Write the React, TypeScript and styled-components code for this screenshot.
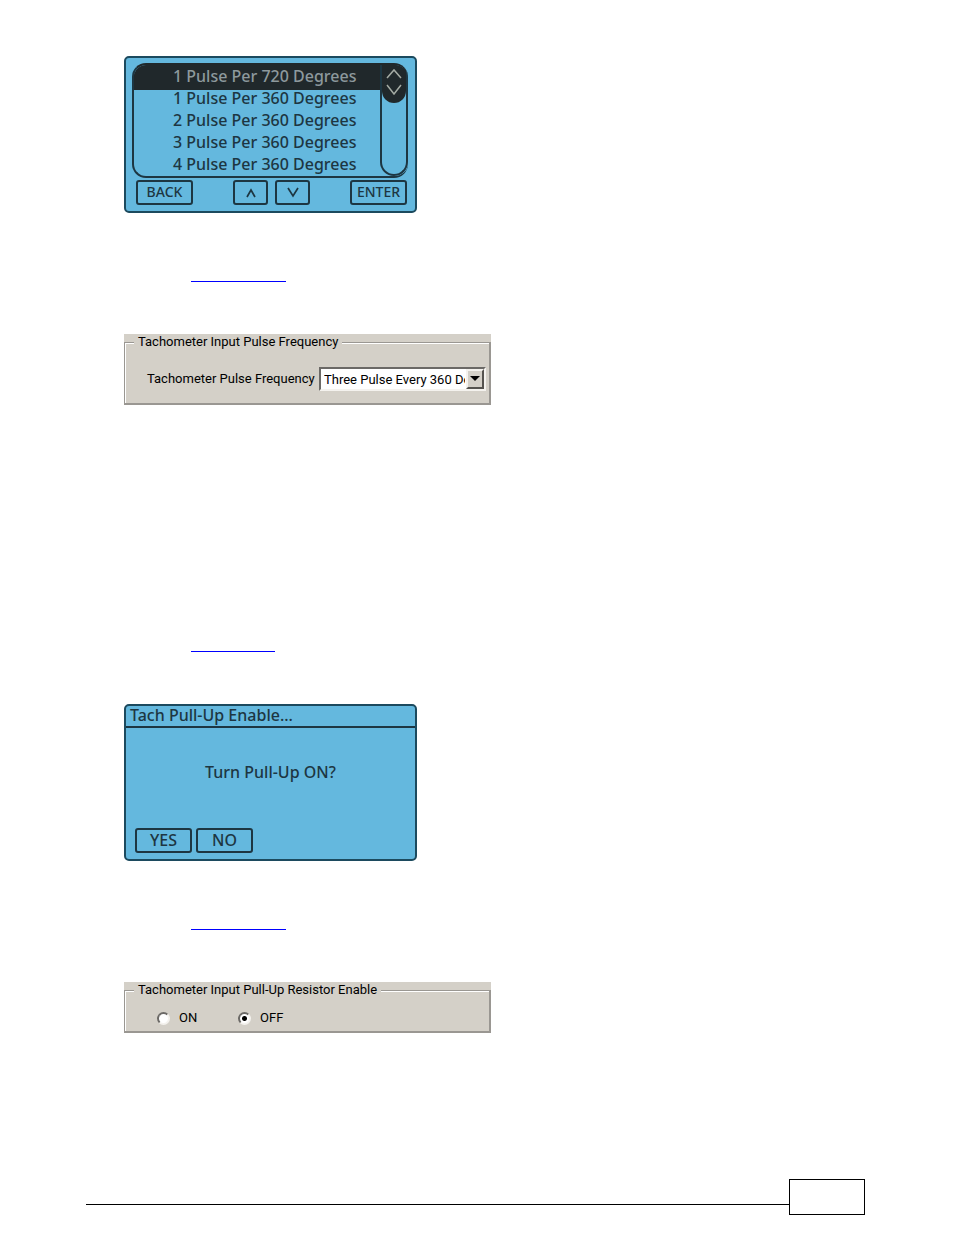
import React from "react";
import styled, { createGlobalStyle, css } from "styled-components";

const ink = "#1d3642";
const dark = "#20282b";
const lcdBlue = "#64b8de";
const face = "#d4d0c8";

const GlobalStyle = createGlobalStyle`
  * { box-sizing: border-box; }
  body { margin: 0; background: #fff; }
`;

const Page = styled.div`
  padding: 56px 89px 20px 86px;
`;

const Content = styled.main`
  display: flex;
  flex-direction: column;
  align-items: flex-start;
  padding-left: 38px;
`;

const ReferenceLink = styled.a<{ $width: number; $space: number }>`
  width: ${(p) => p.$width}px;
  height: 14px;
  margin: ${(p) => p.$space}px 0 52px 67px;
  border-bottom: 1px solid #0000ff;
`;

const Lcd = styled.section`
  display: flex;
  flex-direction: column;
  width: 293px;
  height: 157px;
  border: 2px solid #1c4a5e;
  border-radius: 5px;
  background: ${lcdBlue};
  color: ${ink};
  font: 500 16px/22px "Noto Sans", sans-serif;
`;

const PulseList = styled.div`
  display: grid;
  grid-template-columns: 1fr 28px;
  height: 115px;
  margin: 5px 7px 0 6px;
  border: 2px solid ${ink};
  border-top-color: ${dark};
  border-right: 0;
  border-radius: 14px;
  overflow: hidden;
`;

const Options = styled.ul`
  margin: 0;
  padding: 0;
  list-style: none;
`;

const Option = styled.li<{ $selected?: boolean }>`
  padding-left: 39px;
  white-space: nowrap;
  ${(p) =>
    p.$selected &&
    css`
      background: ${dark};
      box-shadow: 0 3px 0 ${dark};
      color: #8d999d;
    `}
`;

const Track = styled.div`
  border: 2px solid ${ink};
  border-top: 0;
  border-radius: 0 0 14px 14px;
  background: linear-gradient(${dark} 25px, transparent 25px);
`;

const Thumb = styled.svg`
  display: block;
  width: 24px;
  height: 38px;
  border-radius: 0 0 12px 12px;
  background: ${dark};
`;

const Keys = styled.div<{ $gap: number }>`
  display: flex;
  gap: ${(p) => p.$gap}px;
`;

const KeyBar = styled.div<{ $split?: boolean }>`
  display: flex;
  justify-content: ${(p) => (p.$split ? "space-between" : "flex-start")};
  margin: ${(p) => (p.$split ? "2px 8px 0 10px" : "auto 8px 6px 9px")};
  font-size: ${(p) => (p.$split ? 14 : 16)}px;
`;

const Key = styled.button<{ $small?: boolean }>`
  display: flex;
  align-items: center;
  justify-content: center;
  width: ${(p) => (p.$small ? 35 : 57)}px;
  height: 25px;
  padding: 0 0 2px;
  border: 2px solid ${ink};
  border-radius: 3px;
  background: transparent;
  color: ${ink};
  font: inherit;
`;

const ScreenTitle = styled.h2`
  height: 22px;
  margin: 0;
  padding-left: 4px;
  border-bottom: 2px solid ${ink};
  font: inherit;
  line-height: 18px;
`;

const Question = styled.p`
  margin: 33px 0 0;
  text-align: center;
`;

const Panel = styled.section<{ $height: number }>`
  display: flex;
  width: 367px;
  height: ${(p) => p.$height}px;
  background: ${face};
  color: #000;
  font: 13px/16px Roboto, "Liberation Sans", sans-serif;
`;

const Group = styled.fieldset`
  flex: 1;
  min-width: 0;
  margin: 0;
  padding: 0;
  border: 1px solid #9a9792;
  border-bottom-width: 2px;
  border-right-width: 2px;
  box-shadow: inset 1px 1px 0 #fff;
`;

const Legend = styled.legend`
  margin-left: 9px;
  padding: 0 4px;
  background: ${face};
`;

const FieldRow = styled.div`
  display: flex;
  align-items: center;
  justify-content: space-between;
  margin: 17px 3px 0 22px;
`;

const SelectBox = styled.div`
  display: grid;
  width: 167px;
  height: 24px;
  border: 2px solid;
  border-color: #6b6966 #f4f2ee #f4f2ee #6b6966;
  background: #fff;
`;

const Select = styled.select`
  grid-area: 1 / 1;
  min-width: 0;
  padding: 2px 19px 0 3px;
  border: 0;
  border-radius: 0;
  appearance: none;
  background: #fff;
  color: #000;
  font: inherit;
`;

const Arrow = styled.svg`
  grid-area: 1 / 1;
  justify-self: end;
  width: 18px;
  height: 20px;
  border: 2px solid;
  border-color: #f4f2ee #55534f #55534f #f4f2ee;
  background: ${face};
  pointer-events: none;
`;

const Radios = styled.div`
  display: flex;
  margin: 12px 0 0 32px;
`;

const RadioLabel = styled.label`
  display: flex;
  align-items: center;
  gap: 9px;
  width: 81px;
`;

const Radio = styled.input`
  width: 13px;
  height: 13px;
  margin: 0;
  border: 2px solid;
  border-color: #6b6966 #f4f2ee #f4f2ee #6b6966;
  border-radius: 50%;
  appearance: none;
  background: #fff;
  &:checked {
    background: radial-gradient(circle, #000 2px, #fff 3px);
  }
`;

const Footer = styled.footer`
  display: flex;
  margin-top: 146px;
`;

const Rule = styled.div`
  flex: 1;
  height: 26px;
  border-bottom: 1px solid #000;
`;

const PageNumber = styled.div`
  width: 76px;
  height: 36px;
  border: 1px solid #000;
`;

const pulses = [
  "1 Pulse Per 720 Degrees",
  "1 Pulse Per 360 Degrees",
  "2 Pulse Per 360 Degrees",
  "3 Pulse Per 360 Degrees",
  "4 Pulse Per 360 Degrees",
];

function Chevron({ down }: { down?: boolean }) {
  return (
    <svg width="14" height="12" viewBox="0 0 14 12" fill="none" stroke={ink} strokeWidth="1.7">
      <path d={down ? "M2 2 7 10 12 2" : "M3 11 7 4 11 11"} />
    </svg>
  );
}

export default function App() {
  return (
    <Page>
      <GlobalStyle />
      <Content>
        <Lcd>
          <PulseList>
            <Options>
              {pulses.map((p, i) => (
                <Option key={p} $selected={i === 0}>{p}</Option>
              ))}
            </Options>
            <Track>
              <Thumb viewBox="0 0 24 38" fill="none" stroke="#a3aaa3" strokeWidth="1.5">
                <path d="M5 13 12 5 19 13M5 20 12 29 19 20" />
              </Thumb>
            </Track>
          </PulseList>
          <KeyBar $split>
            <Key>BACK</Key>
            <Keys $gap={7}>
              <Key $small aria-label="Up"><Chevron /></Key>
              <Key $small aria-label="Down"><Chevron down /></Key>
            </Keys>
            <Key>ENTER</Key>
          </KeyBar>
        </Lcd>

        <ReferenceLink href="#software" aria-label="Software" $width={95} $space={55} />

        <Panel $height={71}>
          <Group>
            <Legend>Tachometer Input Pulse Frequency</Legend>
            <FieldRow>
              <label htmlFor="frequency">Tachometer Pulse Frequency</label>
              <SelectBox>
                <Select id="frequency">
                  <option>Three Pulse Every 360 Degrees</option>
                </Select>
                <Arrow viewBox="0 0 14 16"><path d="M2 5H12L7 10Z" fill="#000" /></Arrow>
              </SelectBox>
            </FieldRow>
          </Group>
        </Panel>

        <ReferenceLink href="#display" aria-label="Display" $width={84} $space={233} />

        <Lcd>
          <ScreenTitle>Tach Pull-Up Enable...</ScreenTitle>
          <Question>Turn Pull-Up ON?</Question>
          <KeyBar>
            <Keys $gap={4}>
              <Key>YES</Key>
              <Key>NO</Key>
            </Keys>
          </KeyBar>
        </Lcd>

        <ReferenceLink href="#software" aria-label="Software" $width={95} $space={55} />

        <Panel $height={51}>
          <Group>
            <Legend>Tachometer Input Pull-Up Resistor Enable</Legend>
            <Radios>
              <RadioLabel><Radio type="radio" name="pullup" />ON</RadioLabel>
              <RadioLabel><Radio type="radio" name="pullup" defaultChecked />OFF</RadioLabel>
            </Radios>
          </Group>
        </Panel>
      </Content>
      <Footer>
        <Rule />
        <PageNumber />
      </Footer>
    </Page>
  );
}
